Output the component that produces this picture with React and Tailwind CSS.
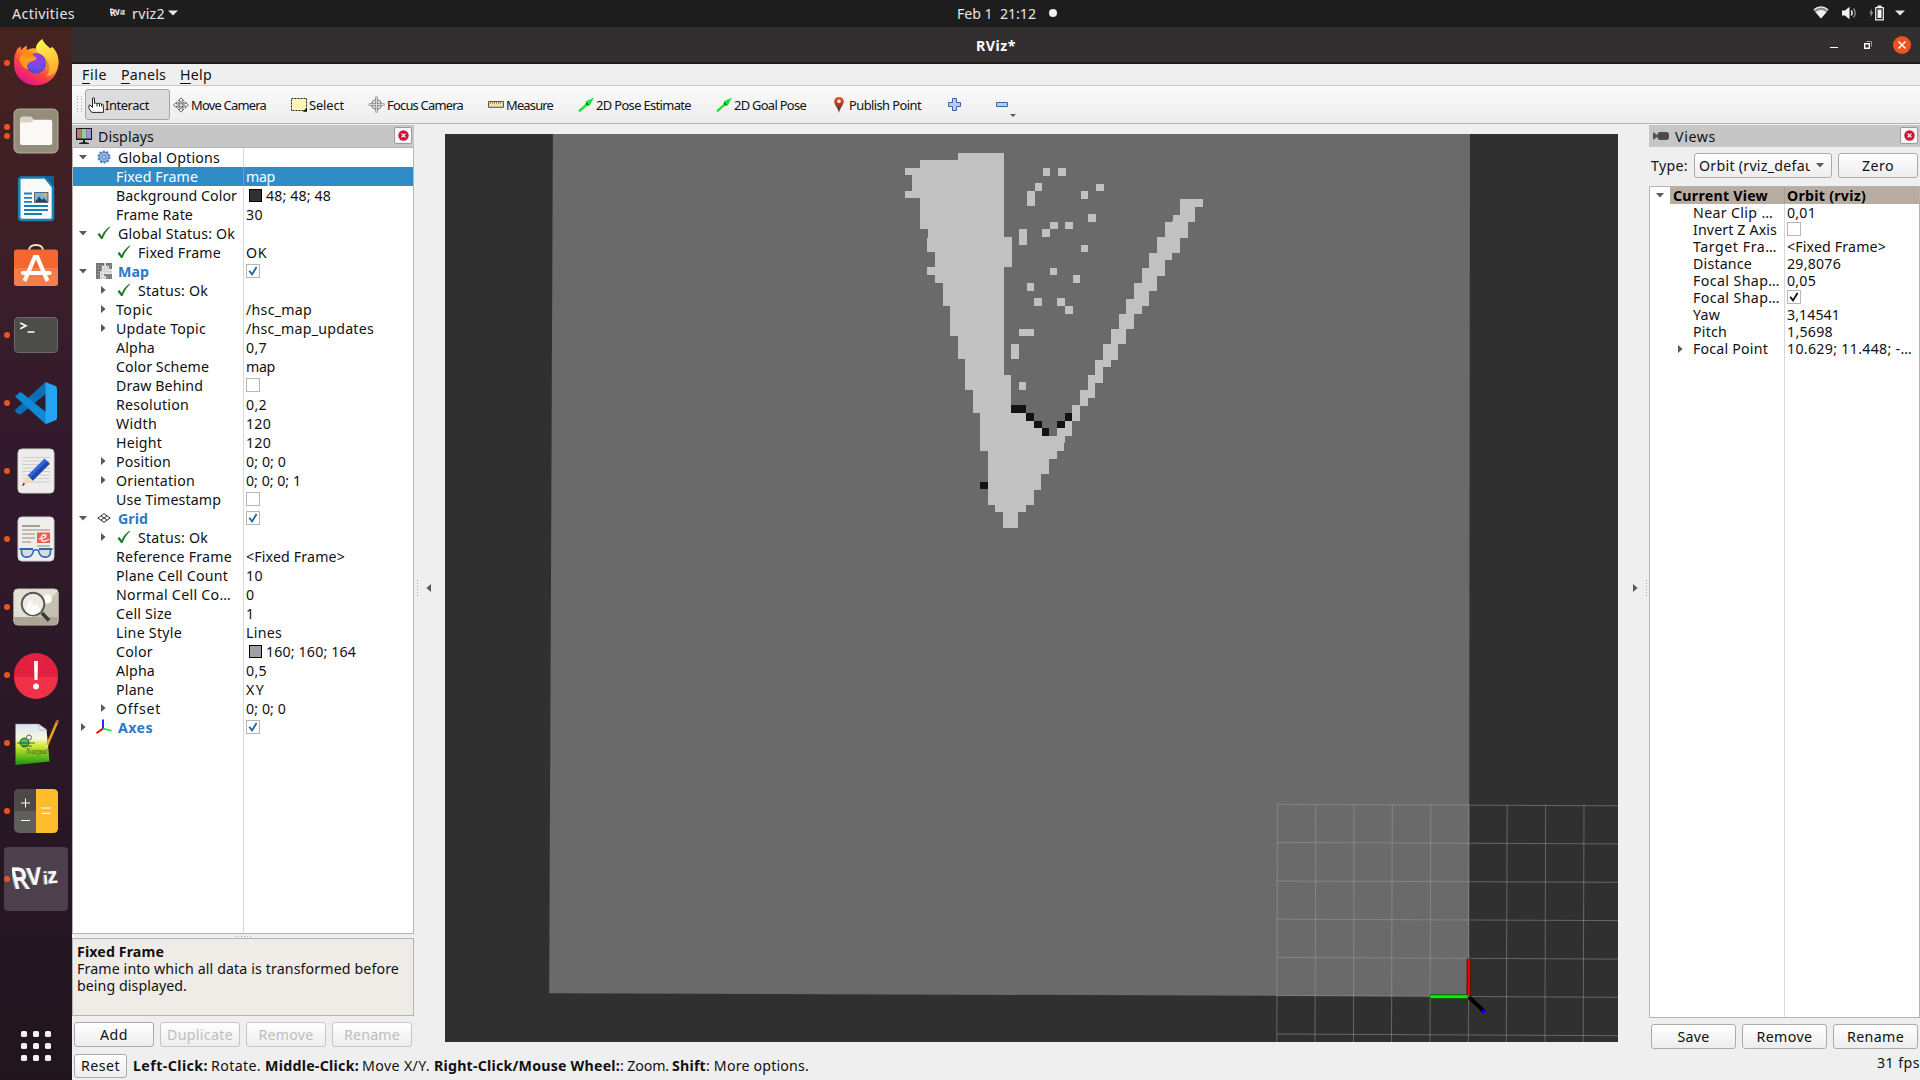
import React, { useLayoutEffect, useRef, useState } from "react";

/* Text set to a fixed advance width by adjusting its letter spacing. */
function Fit({ w, children, className = "" }) {
  const ref = useRef(null);
  const [ls, setLs] = useState(0);
  useLayoutEffect(() => {
    const el = ref.current;
    el.style.letterSpacing = "0px";
    const natural = el.getBoundingClientRect().width;
    const n = el.textContent.length;
    if (w && n > 1) setLs((w + 1 - natural) / n);
    el.style.letterSpacing = "";
  }, [w, children]);
  return (
    <span ref={ref} className={"inline-block shrink-0 whitespace-pre " + className} style={{ letterSpacing: ls + "px" }}>
      {children}
    </span>
  );
}

/* ---------- small glyphs ---------- */
const Down = () => (
  <svg width="8" height="5" viewBox="0 0 8 5"><path d="M0 0H8L4 4.6Z" fill="#5a5a5a" /></svg>
);
const Right = () => (
  <svg width="5" height="8" viewBox="0 0 5 8"><path d="M0 0V8L4.6 4Z" fill="#5a5a5a" /></svg>
);
const Tick = () => (
  <svg width="14" height="14" viewBox="0 0 14 14"><path d="M.5 8.2 2.6 6.9 4.6 10.2C6.6 6 9.4 2.6 13 .6L13.2 1.2C9.8 4.4 7.2 8.4 5.6 13H4Z" fill="#1d7a22" /></svg>
);
function Box({ checked, dark }) {
  return (
    <span className="box-border flex h-[14px] w-[14px] shrink-0 items-center justify-center border border-[#b6b6b6] bg-white">
      {checked && (
        <svg width="10" height="10" viewBox="0 0 10 10"><path d="M1.2 4.8 4 8.4 8.6 1" fill="none" stroke={dark ? "#111" : "#2166a5"} strokeWidth="1.8" /></svg>
      )}
    </span>
  );
}
const Swatch = ({ light }) => (
  <span className={"mr-[4px] ml-[3px] h-[13px] w-[13px] shrink-0 border border-black " + (light ? "bg-[#a0a0a4]" : "bg-[#303030]")} />
);
const Gear = () => (
  <svg width="14" height="14" viewBox="0 0 14 14">
    <circle cx="7" cy="7" r="5.6" fill="#8fb2dd" stroke="#4b7dbe" strokeWidth="1.8" strokeDasharray="2 1.5" />
    <circle cx="7" cy="7" r="4.6" fill="#9dbbe2" stroke="#4f80c0" strokeWidth=".8" />
    <circle cx="7" cy="7" r="2" fill="#c8daf0" stroke="#4472b4" strokeWidth="1" />
  </svg>
);
const MapIcon = () => (
  <svg width="16" height="16" viewBox="0 0 16 16" shapeRendering="crispEdges">
    <path d="M0 0H16V16H0Z" fill="#e6e6e6" />
    <path d="M0 0H8V3H6V8H4V16H0ZM10 0H16V6H13V3H10ZM8 11H16V16H10V13H8Z" fill="#6c6c6c" />
    <path d="M2.5 0V16M5.5 0V16M8.5 0V16M11.5 0V16M14.5 0V16M0 2.5H16M0 5.5H16M0 8.5H16M0 11.5H16M0 14.5H16" stroke="#b5b5b5" strokeOpacity=".45" strokeWidth="1" fill="none" />
  </svg>
);
const GridIcon = () => (
  <svg width="14" height="10" viewBox="0 0 14 10"><path d="M7 .7 13.2 5 7 9.3 .8 5ZM3.9 2.9 10.1 7.1M10.1 2.9 3.9 7.1" fill="none" stroke="#333" strokeWidth="1" /></svg>
);
const AxesIcon = () => (
  <svg width="16" height="16" viewBox="0 0 16 16">
    <path d="M7 9.5V.5" stroke="#00f" strokeWidth="1.7" /><path d="M7 9.5 15.6 11.8" stroke="#0e2" strokeWidth="1.7" /><path d="M7 9.5 .5 14.3" stroke="#e00" strokeWidth="1.9" />
  </svg>
);
const Dots = () => (
  <span className="flex h-[17px] w-px flex-col justify-between">
    {[0, 1, 2, 3, 4, 5].map((i) => <i key={i} className="h-px w-px bg-[#a5a5a5]" />)}
  </span>
);

/* ---------- displays tree ---------- */
/* level, arrow, icon, label, width, value, value width, extra */
const rows = [
  [0, "d", "gear", "Global Options", 101],
  [1, "", "", "Fixed Frame", 81, "map", 28, "sel"],
  [1, "", "", "Background Color", 120, "48; 48; 48", 64, "dark"],
  [1, "", "", "Frame Rate", 76, "30", 16],
  [0, "d", "tick", "Global Status: Ok", 116],
  [1, "", "tick", "Fixed Frame", 82, "OK", 20],
  [0, "d", "map", "Map", 30, null, 0, "on"],
  [1, "r", "tick", "Status: Ok", 69],
  [1, "r", "", "Topic", 36, "/hsc_map", 65],
  [1, "r", "", "Update Topic", 89, "/hsc_map_updates", 127],
  [1, "", "", "Alpha", 38, "0,7", 20],
  [1, "", "", "Color Scheme", 92, "map", 28],
  [1, "", "", "Draw Behind", 86, null, 0, "off"],
  [1, "", "", "Resolution", 72, "0,2", 20],
  [1, "", "", "Width", 40, "120", 24],
  [1, "", "", "Height", 45, "120", 24],
  [1, "r", "", "Position", 54, "0; 0; 0", 39],
  [1, "r", "", "Orientation", 78, "0; 0; 0; 1", 54],
  [1, "", "", "Use Timestamp", 104, null, 0, "off"],
  [0, "d", "grid", "Grid", 29, null, 0, "on"],
  [1, "r", "tick", "Status: Ok", 69],
  [1, "", "", "Reference Frame", 115, "<Fixed Frame>", 98],
  [1, "", "", "Plane Cell Count", 111, "10", 16],
  [1, "", "", "Normal Cell Co…", 114, "0", 8],
  [1, "", "", "Cell Size", 55, "1", 8],
  [1, "", "", "Line Style", 65, "Lines", 35],
  [1, "", "", "Color", 36, "160; 160; 164", 89, "light"],
  [1, "", "", "Alpha", 38, "0,5", 20],
  [1, "", "", "Plane", 37, "XY", 18],
  [1, "r", "", "Offset", 44, "0; 0; 0", 39],
  [0, "r", "axes", "Axes", 34, null, 0, "on"],
];
const icons = { gear: <Gear />, tick: <Tick />, map: <MapIcon />, grid: <GridIcon />, axes: <AxesIcon /> };

function Row({ r }) {
  const [level, arrow, icon, label, w, value, vw, extra] = r;
  const blue = extra === "on";
  return (
    <div className={"flex h-[19px] shrink-0 " + (extra === "sel" ? "bg-[#308cc6] text-white" : "")}>
      <div className={"flex w-[171px] border-r " + (extra === "sel" ? "border-[#5ba3d1]" : "border-[#d8d8d8]")}>
        {level === 1 && <span className="w-5 shrink-0" />}
        <span className="flex h-[18px] w-5 shrink-0 items-center justify-center">{arrow === "d" ? <Down /> : arrow === "r" ? <Right /> : null}</span>
        {icon ? (
          <span className={"flex h-[18px] shrink-0 items-center " + (level === 1 ? "w-[25px] pl-1" : icon === "map" || icon === "axes" ? "w-[25px] pl-[3px]" : "w-[25px] pl-1")}>{icons[icon]}</span>
        ) : (
          <span className="w-[3px] shrink-0" />
        )}
        <Fit w={w} className={"leading-[19px] " + (blue ? "font-bold text-[#2a7ac8]" : "")}>{label}</Fit>
      </div>
      <div className="flex h-[19px] pl-[2px]">
        {(extra === "on" || extra === "off") && <span className="pt-[2px]"><Box checked={blue} /></span>}
        {(extra === "dark" || extra === "light") && <span className="flex pt-[3px]"><Swatch light={extra === "light"} /></span>}
        {value && <Fit w={vw} className="leading-[19px]">{value}</Fit>}
      </div>
    </div>
  );
}

const viewRows = [
  ["Near Clip …", 79, "0,01", 28],
  ["Invert Z Axis", 83, null, 0, "off"],
  ["Target Fra…", 83, "<Fixed Frame>", 98],
  ["Distance", 58, "29,8076", 53],
  ["Focal Shap…", 86, "0,05", 28],
  ["Focal Shap…", 86, null, 0, "on"],
  ["Yaw", 26, "3,14541", 52],
  ["Pitch", 33, "1,5698", 45],
  ["Focal Point", 74, "10.629; 11.448; -…", 124, "", true],
];

function Btn({ w, tw, h, children, off }) {
  return (
    <div className={"flex shrink-0 items-center justify-center rounded-[3px] border bg-linear-to-b from-white to-[#ededed] pb-px " + w + " " + h + " " + (off ? "border-[#c6c6c6] text-[#bebebe]" : "border-[#ababab]")}>
      <Fit w={tw}>{children}</Fit>
    </div>
  );
}
const CloseBtn = () => (
  <span className="flex h-[17px] w-[18px] items-center justify-center rounded-[2px] border border-[#9b9b9b] bg-[#f7f7f7]">
    <svg width="11" height="11" viewBox="0 0 11 11"><circle cx="5.5" cy="5.5" r="5.2" fill="#c8193c" /><path d="M3.6 3.6 7.4 7.4M7.4 3.6 3.6 7.4" stroke="#fff" strokeWidth="1.3" /></svg>
  </span>
);

/* ---------- toolbar ---------- */
const Arrow2D = () => (
  <svg width="16" height="16" viewBox="0 0 16 16"><path d="M16 .5 7.5 4.6 8.6 6 .2 13.6 1.8 15.3 9.8 7.9 11.4 9Z" fill="#12e834" /><path d="M8 6 10.2 8.2" stroke="#075f16" strokeWidth="1.6" /></svg>
);
function Tool({ ml, iw, gap, tw, icon, children }) {
  return (
    <div className={"flex shrink-0 items-center " + ml}>
      <span className={"flex shrink-0 justify-center " + iw + " " + gap}>{icon}</span>
      <Fit w={tw} className="relative top-px">{children}</Fit>
    </div>
  );
}
const moveArrows = "M8 .8 10.6 3.6H9V7H12.4V5.2L15.4 8 12.4 10.8V9H9V12.4H10.6L8 15.2 5.4 12.4H7V9H3.6V10.8L.6 8 3.6 5.2V7H7V3.6H5.4Z";
function Toolbar() {
  return (
    <div className="flex h-[38px] shrink-0 items-center border-b border-[#b3b3b3] bg-linear-to-b from-[#fafafa] to-[#ededed] pl-[5px] text-[12.9px]">
      <div className="flex w-[8px] gap-[3px] pb-px"><Dots /><Dots /></div>
      <div className="flex h-[31px] w-[85px] shrink-0 items-center rounded-[3px] border border-[#a6a6a6] bg-[#dcdcdc] pl-[2px]">
        <svg className="mr-px shrink-0" width="16" height="16" viewBox="0 0 16 16">
          <path d="M4.5 10V2Q4.5.6 5.5.6T6.5 2V6.5Q7.5 5.5 8.8 6.6 10.2 5.6 11.2 6.8 12.5 5.8 13.3 7.2 15.4 6.6 15.4 8.6V15.4H3.8L1 11.5V8.4L2 8 4.5 10.5ZM9 7V9.5M11.5 7V9.5M13.5 7.2V9.5" fill="#fff" stroke="#222" strokeWidth="1" />
        </svg>
        <Fit w={43} className="relative top-px">Interact</Fit>
      </div>
      <Tool ml="ml-[3px]" iw="w-4" gap="mr-[2px]" tw={74} icon={<svg width="16" height="16" viewBox="0 0 16 16"><path d={moveArrows} fill="#fff" stroke="#555" strokeWidth=".9" /><path d="M4.5 4.5 11.5 11.5M11.5 4.5 4.5 11.5" stroke="#666" strokeWidth=".9" /><circle cx="8" cy="8" r="2" fill="#ddd" stroke="#666" strokeWidth=".8" /></svg>}>Move Camera</Tool>
      <Tool ml="ml-[25px]" iw="w-4" gap="mr-[2px]" tw={34} icon={<svg width="16" height="14" viewBox="0 0 16 14"><path d="M.5 .5H15.5V12.5H.5Z" fill="#fff6b8" stroke="#222" strokeWidth="1" strokeDasharray="2 1" /><path d="M16 9.5V13.8H11.8Z" fill="#111" /></svg>}>Select</Tool>
      <Tool ml="ml-[24px]" iw="w-[17px]" gap="mr-[2px]" tw={75} icon={<svg width="17" height="17" viewBox="0 0 17 17"><circle cx="8.5" cy="8.5" r="4.8" fill="none" stroke="#777" strokeWidth="1.1" /><circle cx="8.5" cy="8.5" r="2.2" fill="none" stroke="#888" strokeWidth=".9" /><path d="M8.5 .5V16.5M.5 8.5H16.5" stroke="#777" strokeWidth="2.2" /><path d="M8.5 1V16M1 8.5H16" stroke="#eee" strokeWidth=".8" /></svg>}>Focus Camera</Tool>
      <Tool ml="ml-[25px]" iw="w-4" gap="mr-[2px]" tw={46} icon={<svg width="16" height="7" viewBox="0 0 16 7"><path d="M.5 .5H15.5V6.3H.5Z" fill="#ece0a4" stroke="#55534a" /><path d="M2.5 1V3M4.5 1V3M6.5 1V3M8.5 1V3M10.5 1V3M12.5 1V3" stroke="#777252" strokeWidth=".7" /></svg>}>Measure</Tool>
      <Tool ml="ml-[25px]" iw="w-4" gap="mr-[2px]" tw={94} icon={<Arrow2D />}>2D Pose Estimate</Tool>
      <Tool ml="ml-[25px]" iw="w-4" gap="mr-[2px]" tw={71} icon={<Arrow2D />}>2D Goal Pose</Tool>
      <Tool ml="ml-[25px]" iw="w-[16px]" gap="mr-[2px]" tw={71} icon={<svg width="10" height="16" viewBox="0 0 10 16"><defs><linearGradient id="pin" x2="0" y2="1"><stop stopColor="#ee5230" /><stop offset=".6" stopColor="#8e3a22" /><stop offset="1" stopColor="#403528" /></linearGradient></defs><path d="M5 0C8 0 9.8 2 9.8 4.6 9.8 8 6 11 5 16 4 11 .2 8 .2 4.6 .2 2 2 0 5 0Z" fill="url(#pin)" /><circle cx="5" cy="4.3" r="1.7" fill="#fff" /></svg>}>Publish Point</Tool>
      <svg className="ml-[27px] shrink-0" width="13" height="13" viewBox="0 0 13 13"><path d="M4.5 .5H8.5V4.5H12.5V8.5H8.5V12.5H4.5V8.5H.5V4.5H4.5Z" fill="#b4cdec" stroke="#3465a4" /></svg>
      <svg className="ml-[35px] shrink-0" width="12" height="5" viewBox="0 0 12 5"><path d="M.5 .5H11.5V4.5H.5Z" fill="#b4cdec" stroke="#3465a4" /></svg>
      <svg className="mt-[22px] ml-[2px] shrink-0" width="6" height="4" viewBox="0 0 6 4"><path d="M0 0H6L3 3Z" fill="#5a5a5a" /></svg>
    </div>
  );
}

/* ---------- 3D view ---------- */
const freeSpace =
  "234,69 372,69 372,321 396,321 396,411 372,411 372,735 393,735 393,849 438,849 438,873 462,873 462,894 486,894 486,918 531,918 531,894 555,894 555,873 576,873 576,825 600,825 600,780 624,780 624,735 645,735 645,690 669,690 669,642 693,642 693,597 717,597 717,552 738,552 738,507 762,507 762,459 786,459 786,414 807,414 807,369 831,369 831,321 855,321 855,276 876,276 879,270 879,255 900,255 900,207 969,207 969,231 945,231 945,276 924,276 924,324 900,324 900,369 876,369 876,390 855,390 855,438 831,438 831,483 807,483 807,528 786,528 786,552 762,552 762,597 738,597 738,642 714,642 714,690 693,690 693,711 669,711 669,759 645,759 645,804 624,804 624,828 600,828 600,873 576,873 576,918 555,918 555,939 552,939 552,963 531,963 531,987 507,987 507,1032 483,1032 483,1080 462,1080 462,1125 438,1125 438,1146 414,1146 414,1194 369,1194 369,1146 345,1146 345,1125 324,1125 324,963 300,963 300,849 279,849 279,780 255,780 255,687 234,687 234,618 210,618 210,528 189,528 189,459 165,459 165,435 141,435 141,411 165,411 165,366 141,366 141,324 144,324 144,297 120,297 120,204 75,204 75,183 96,183 96,135 75,135 75,114 120,114 120,90 234,90";
const specks = [
  [489, 114, 21, 24], [534, 114, 24, 24], [465, 159, 21, 24], [648, 162, 24, 21], [441, 183, 24, 45], [603, 183, 21, 24], [624, 252, 24, 24],
  [510, 276, 24, 21], [555, 276, 24, 21], [417, 297, 24, 48], [486, 297, 24, 24], [603, 345, 21, 21], [510, 414, 21, 21], [579, 435, 21, 24],
  [441, 459, 21, 24], [462, 504, 24, 24], [531, 504, 24, 24], [555, 528, 24, 24], [417, 597, 45, 21], [393, 642, 24, 45], [417, 756, 21, 24],
];
const walls = [[393, 825, 45, 24], [438, 849, 24, 24], [462, 873, 24, 21], [486, 894, 21, 24], [531, 873, 24, 21], [555, 849, 21, 24], [300, 1056, 24, 21]];
const gridV = [[1277.4, 1276.8], [1315.9, 1315], [1354.1, 1353.5], [1392.3, 1391.5], [1430.8, 1430], [1469, 1468.4], [1507.2, 1506.3], [1545.7, 1544.9], [1584, 1583.2]];
const gridH = [[804.3, 805.8], [842.4, 843.9], [881, 882.3], [919.2, 920.6], [957.4, 959.1], [995.5, 997.3], [1034, 1035.7]];
function Viewport() {
  return (
    <svg className="block" width="1173" height="908" viewBox="445 134 1173 908">
      <path d="M445 134H1618V1042H445Z" fill="#303030" />
      <path d="M552.9 134H1470L1469 996.4 549.2 993.3Z" fill="#6a6a6a" />
      <g transform="translate(880 130) scale(.333333)" shapeRendering="crispEdges">
        <polygon points={freeSpace} fill="#c1c1c1" />
        {specks.map(([x, y, w, h], i) => <rect key={i} x={x} y={y} width={w} height={h} fill="#c1c1c1" />)}
        {walls.map(([x, y, w, h], i) => <rect key={i} x={x} y={y} width={w} height={h} fill="#131313" />)}
      </g>
      <g stroke="#a0a0a4" strokeOpacity=".48" strokeWidth="1">
        {gridV.map(([a, b], i) => <path key={i} d={`M${a} 804.5L${b} 1042`} />)}
        {gridH.map(([a, b], i) => <path key={i} d={`M1277 ${a}L1618 ${b}`} />)}
      </g>
      <path d="M1466.7 958.5H1470.7V996H1466.5Z" fill="#5a0505" />
      <path d="M1467.5 959H1470V996H1467.5Z" fill="#f00000" />
      <path d="M1430 994.3H1468V998.8H1430Z" fill="#076a07" />
      <path d="M1430.5 995.3H1467.5V997.9H1430.5Z" fill="#00f000" />
      <path d="M1469 997 1484 1011.5" stroke="#000" strokeWidth="4" />
      <circle cx="1484" cy="1011.5" r="1.9" fill="#00f" />
    </svg>
  );
}

/* ---------- dock ---------- */
const S = ({ children }) => <svg className="shrink-0" width="48" height="48" viewBox="0 0 48 48">{children}</svg>;
const Firefox = () => (
  <S>
    <defs>
      <linearGradient id="ffa" x1=".8" y1=".05" x2=".25" y2=".95"><stop stopColor="#fff44f" /><stop offset=".35" stopColor="#ffa02c" /><stop offset=".68" stopColor="#ff4240" /><stop offset="1" stopColor="#e3138d" /></linearGradient>
      <linearGradient id="ffy" x1=".4" x2=".7" y2="1"><stop stopColor="#fff44f" /><stop offset="1" stopColor="#ffa52a" /></linearGradient>
      <radialGradient id="ffp" cx=".55" cy=".25" r=".8"><stop stopColor="#a333dc" /><stop offset=".6" stopColor="#6b52e8" /><stop offset="1" stopColor="#5a3cc4" /></radialGradient>
    </defs>
    <g transform="translate(0 -.7)">
      <path d="M4.5 12.5C5 10.5 7 9 8.5 8.3L9.4 12C11 9.3 13 8 15.2 7.5 14.3 9.6 14.6 10.7 15 11.6 18 10.3 22 9.6 24 10.4 24.3 6 27 3.2 30.5 1 31.5 5 35 7 38 10.3 39 11.4 40 10.4 40 8.8 45 13.5 47 19.5 46.4 26 45.4 38.5 36 47 24 47 11.5 47 2 38 2 25.5 2 20 2.6 15.8 4.5 12.5Z" fill="url(#ffa)" />
      <path d="M30.5 1C31.5 5 35 7 38 10.3L40 8.8C45.5 14 47 20 46.2 26.5 45 34 40 38 34 38 38 34 38.5 28 36 23 33 17 25 16 24 10.4 24.3 6 27 3.2 30.5 1Z" fill="url(#ffy)" />
      <circle cx="24" cy="25" r="10.3" fill="url(#ffp)" />
      <path d="M7.5 20C8.5 16.8 11 15.8 15 17.2 19 18.8 23 17 24.8 20 23 22.8 19.5 22.8 17.5 24 15 25.5 14.5 28 16 31.5 11.5 30 8 25.5 7.5 20Z" fill="#ff9a1f" />
      <path d="M10 11.5C14 11 20 14 23 19 18 19.5 13.5 18.5 9.5 18Z" fill="#ff8a16" />
    </g>
  </S>
);
const Files = () => (
  <S><rect x="2" y="2" width="44" height="44" rx="5" fill="#958d7c" stroke="#b5ae9e" /><path d="M8 12Q8 9.5 10 9.5H18Q20 9.5 21 11.5L22 13H38V20H8Z" fill="#d8d4c8" /><path d="M8 15.5H19L22 12.8H38Q40.2 12.8 40.2 15V36Q40.2 38 38 38H10Q8 38 8 36Z" fill="#faf9f7" /></S>
);
const Writer = () => (
  <S><path d="M10 2.5H33L41 12V42.5Q41 45 38.5 45H10Q7.2 45 7.2 42.5V5.5Q7.2 2.5 10 2.5Z" fill="#fafafa" stroke="#1582b8" strokeWidth="2.6" /><path d="M33 1H42V12Z" fill="#0d6292" /><path d="M12 18.5H20M12 22.8H20M12 26.8H20M12 31H36M12 35H36M12 39H30" stroke="#1781b5" strokeWidth="1.8" /><path d="M22.5 17.5H36V27.5H22.5Z" fill="#73b9dc" stroke="#335" strokeWidth=".7" /><path d="M23 27 27 21.5 30 25 32 23 35.5 27Z" fill="#34404c" /><circle cx="33.5" cy="19.8" r="1.6" fill="#f0b429" /></S>
);
const Software = () => (
  <S><g transform="translate(0 -1)"><path d="M17 9Q17 3 24 3T31 9" fill="none" stroke="#f4e2c4" strokeWidth="1.8" /><path d="M2 10Q2 7.5 4.5 7.5H43.5Q46 7.5 46 10V41Q46 44 43 44H5Q2 44 2 41Z" fill="#f3682e" /><path d="M2 26H46V41Q46 44 43 44H5Q2 44 2 41Z" fill="#f57d48" /><path d="M12.5 39 22.8 15H25.2L35.5 39" fill="none" stroke="#fff" strokeWidth="4.2" /><path d="M11 31H37.5" stroke="#fff" strokeWidth="4.2" strokeLinecap="round" /></g></S>
);
const Terminal = () => (
  <S><rect x="2.5" y="6.5" width="43" height="35" rx="3.5" fill="#4c4c4b" stroke="#6a6968" /><path d="M8.3 12 14 14.8 8.3 17.7" fill="none" stroke="#fff" strokeWidth="1.6" /><path d="M15.5 21H22.5" stroke="#fff" strokeWidth="1.5" /></S>
);
const Code = () => (
  <S><path d="M3 31 33.5 3 35 14 8.5 35.5Q6.5 36 3 32Z" fill="#0a6fb5" /><path d="M3 17.5 7.5 13.5 9.5 13.5 35 34 33.5 45Z" fill="#0b8ad6" /><path d="M33.5 3 43.5 7Q45 8 45 9.5V38.5Q45 40.5 43.5 41.2L33.5 45.3Z" fill="#24a4f2" /></S>
);
const Editor = () => (
  <S><rect x="6" y="2" width="36" height="44" rx="4" fill="#eeedec" stroke="#cfcfcf" /><path d="M10 10.5H38M10 14H38M10 17.5H38M10 21H38M10 24.5H38M10 28H38M10 31.5H38M10 35H38" stroke="#cbcbcb" strokeWidth=".9" /><path d="M32.5 11.5 37.5 16.5 20.5 33.5 15.5 28.5Z" fill="#2e64dd" /><path d="M35 14 37.8 16.8 20.8 33.8 18 31Z" fill="#1e48a8" /><path d="M15.5 28.5 20.5 33.5 10 39Z" fill="#f6d6b4" /><path d="M11.6 35.8 13 37.5 9.8 39.2Z" fill="#333" /></S>
);
const Viewer = () => (
  <S><rect x="6" y="2" width="36" height="44" rx="4" fill="#efeeec" stroke="#cfcfcf" /><path d="M10 11H28" stroke="#9d9684" strokeWidth="1.8" /><path d="M10 15H38M10 19H23M10 23H23M10 27H19M25 31H38" stroke="#c2bcac" strokeWidth="1.8" /><rect x="25" y="17.5" width="13" height="10.5" fill="#f15b53" /><path d="M27 24Q34 23.5 34 20.5 31.5 18.5 29.3 22 28.5 27 33 26L37 24.5" fill="none" stroke="#fff" strokeWidth="1.3" /><path d="M9.5 34.5Q9 41.5 13 42 20.5 43 21.5 35.5Q24 34 26.5 35.5 27.5 43 35 42 39 41.5 38.5 34.5" fill="#d8dde2" stroke="#2a69b4" strokeWidth="1.6" /><path d="M7.5 34H21M27 34H40.5" stroke="#2a69b4" strokeWidth="2.2" /></S>
);
const Magnifier = () => (
  <S><rect x="1.8" y="6" width="44.4" height="36" rx="4" fill="#e4e2d6" stroke="#c9c6b7" /><path d="M46 8V34H20Z" fill="#c4c0b2" /><path d="M2 34H46V38Q46 42 42 42H6Q2 42 2 38Z" fill="#aca695" /><circle cx="35.5" cy="16" r="4.5" fill="#fafafa" /><path d="M30 30 37 37.5" stroke="#3a3a3a" strokeWidth="3.6" /><circle cx="21" cy="21" r="11.3" fill="#ecebe4" stroke="#575757" strokeWidth="1.9" /><path d="M13 27 18 16 22 23 24.5 20 29 28Q25 32 20 32Q15 31 13 27Z" fill="#fbfbf8" /></S>
);
const Alert = () => (
  <S><circle cx="24" cy="24" r="22" fill="#e2203f" /><path d="M2 26H46A22 22 0 0 1 2 26Z" fill="#f03148" /><path d="M22 10H26L25.5 29H22.5Z" fill="#fff" /><circle cx="24" cy="35.4" r="2.9" fill="#fff" /></S>
);
const Notepad = () => (
  <S><defs><linearGradient id="np" x2="0" y2="1"><stop offset=".05" stopColor="#dce8f2" /><stop offset=".35" stopColor="#f7f7df" /><stop offset=".55" stopColor="#cbe82c" /><stop offset="1" stopColor="#189414" /></linearGradient></defs><path d="M3.5 5H27L34.5 10.5 37.5 42.5 3.5 46Z" fill="url(#np)" /><path d="M3.5 5H26" stroke="#888" strokeDasharray="1 1" /><path d="M26 5.5 28.5 11.5 34.5 10.5Z" fill="#e8eef3" stroke="#999" strokeWidth=".5" /><circle cx="12.5" cy="23.5" r="4.5" fill="#4fbf47" stroke="#2c5b2e" /><circle cx="17" cy="18.5" r="2.5" fill="#eee" stroke="#444" strokeWidth=".8" /><path d="M5 24H23M10 27H20" stroke="#335" strokeWidth=".8" /><text x="14" y="35" fontSize="9" fontStyle="italic" fontFamily="Liberation Serif, serif" textLength="21" lengthAdjust="spacingAndGlyphs" fill="#40531b">Notepad</text><path d="M45.5 2 34.5 27.5" stroke="#e8a418" strokeWidth="2.6" /><path d="M45.8 1 44.6 4" stroke="#b45a4a" strokeWidth="2.6" /><path d="M35.5 25.5 33.8 29.2" stroke="#ecd9b0" strokeWidth="1.8" /></S>
);
const Calc = () => (
  <S><rect x="2" y="2" width="44" height="44" rx="5" fill="#5f5e5d" /><path d="M2 24V7Q2 2 7 2H24V24Z" fill="#4b4a49" /><path d="M24 2H41Q46 2 46 7V41Q46 46 41 46H24Z" fill="#fdbc2a" /><path d="M9 16H18M13.5 11.5V20.5M9 33.5H18M29 21H39M29 26.3H39" stroke="#fff" strokeWidth="1" /></S>
);
function RVizMark({ size }) {
  return (
    <svg className="shrink-0" width={size} height={size} viewBox="0 0 48 48" fontFamily="Liberation Sans, sans-serif" fontWeight="bold">
      {[["#9b9b9b", -0.9], ["#fafafa", 0.3]].map(([c, d]) => (
        <g key={c} fill={c} transform={`translate(${d} 0)`}>
          <text transform="translate(2.5 33.5) skewX(14) scale(.78 1.12)" fontSize="28">R</text>
          <text transform="translate(15.5 30.5) rotate(-5) scale(.88 1)" fontSize="25">V</text>
          <text transform="translate(31.5 29.5) rotate(-4) scale(.85 .9)" fontSize="20">i</text>
          <text transform="translate(36 28.5) rotate(-5) scale(1 1.12)" fontSize="20">z</text>
        </g>
      ))}
    </svg>
  );
}
const dock = [
  [<Firefox />, 1], [<Files />, 2], [<Writer />, 0], [<Software />, 0], [<Terminal />, 1], [<Code />, 1], [<Editor />, 1], [<Viewer />, 1],
  [<Magnifier />, 1], [<Alert />, 1], [<Notepad />, 1], [<Calc />, 1], [<RVizMark size={48} />, 1],
];
function Dock() {
  return (
    <div className="flex w-[72px] shrink-0 flex-col gap-1 bg-linear-to-b from-[#47221f] via-[#321a2d] via-40% to-[#21151d] px-1 pt-1">
      {dock.map(([icon, dots], i) => (
        <div key={i} className={"flex h-16 w-16 shrink-0 items-center rounded " + (i === 12 ? "bg-[#4d404c]" : "")}>
          <span className="flex w-[8px] shrink-0 flex-col items-start gap-[3px]">
            {Array.from({ length: dots }, (_, k) => <i key={k} className="h-[6px] w-[6px] rounded-full bg-[#e95420]" />)}
          </span>
          {icon}
        </div>
      ))}
      <div className="mt-auto mb-[19px] ml-[17px] grid w-[30px] grid-cols-3 gap-[6px]">
        {Array.from({ length: 9 }, (_, i) => <i key={i} className="h-[6px] w-[6px] rounded-[1.5px] bg-[#f3f3f3]" />)}
      </div>
    </div>
  );
}

/* ---------- shell ---------- */
function TopBar() {
  return (
    <div className="flex h-[27px] shrink-0 items-center bg-[#1d1d1d] pb-px text-[#e6e6e6]">
      <Fit w={62} className="ml-[12px]">Activities</Fit>
      <span className="mr-[6px] ml-[35px]"><RVizMark size={16} /></span>
      <Fit w={32}>rviz2</Fit>
      <svg className="ml-[3px]" width="10" height="6" viewBox="0 0 10 6"><path d="M0 .5H10L5 5.5Z" fill="#e6e6e6" /></svg>
      <span className="ml-[779px] flex items-center"><Fit w={78}>{"Feb 1  21:12"}</Fit><i className="ml-[13px] h-[8px] w-[8px] rounded-full bg-[#f2f2f2]" /></span>
      <div className="mr-[15px] ml-auto flex items-center">
        <svg width="16" height="14" viewBox="0 0 16 14"><path d="M.5 4Q8-2.4 15.5 4L8 12.5Z" fill="#8a8a8a" /><path d="M.8 3.8Q8-2 15.2 3.8" fill="none" stroke="#eee" strokeWidth="1.2" /><path d="M2.5 6Q8 2 13.5 6L8 12.6Z" fill="#f2f2f2" /></svg>
        <svg className="ml-[13px]" width="15" height="14" viewBox="0 0 15 14"><path d="M0 4.5H3L7.5 .8V13.2L3 9.5H0Z" fill="#f2f2f2" /><path d="M9.3 4.5Q11 7 9.3 9.5" stroke="#f2f2f2" fill="none" strokeWidth="1.4" /><path d="M11.5 2.5Q15 7 11.5 11.5" stroke="#8b8b8b" fill="none" strokeWidth="1.4" /></svg>
        <svg className="ml-[12px]" width="15" height="16" viewBox="0 0 15 16"><path d="M3 3.5 .3 8.5H2L1.6 12.5 4.2 7.3H2.5Z" fill="#999" /><path d="M6.7 2.7H14.3V14.8H6.7Z" fill="none" stroke="#f2f2f2" strokeWidth="1.2" /><path d="M8.5 4.5H12.5V13H8.5ZM8.5 .6H12.5V2.5H8.5Z" fill="#f2f2f2" /></svg>
        <svg className="ml-[11px]" width="10" height="6" viewBox="0 0 10 6"><path d="M0 .5H10L5 5.5Z" fill="#e6e6e6" /></svg>
      </div>
    </div>
  );
}
const Menu = ({ w, ml, a, b }) => <Fit w={w} className={ml}><u className="underline decoration-1 underline-offset-[3px]">{a}</u>{b}</Fit>;

export default function App() {
  return (
    <div className="flex h-[1080px] w-[1920px] flex-col overflow-hidden bg-[#efefef] font-['Noto_Sans',sans-serif] text-[14.2px] leading-[17px] text-[#111]">
      <TopBar />
      <div className="flex min-h-0 flex-1">
        <Dock />
        <div className="flex w-[1848px] flex-col">
          <div className="flex h-[37px] shrink-0 items-center border-b-2 border-[#1f1c1c] bg-[#332f30] text-white">
            <Fit w={39} className="relative top-px ml-[904px] font-bold">RViz*</Fit>
            <span className="mt-[6px] mr-[26px] ml-auto h-px w-[8px] bg-white" />
            <svg className="mr-[21px]" width="8" height="8" viewBox="0 0 8 8"><path d="M.7 2.7H5.3V7.3H.7Z" fill="none" stroke="#fff" strokeWidth="1.4" /><path d="M2.5 .5H7.5V5.5" fill="none" stroke="#999" /></svg>
            <svg className="mr-[9px]" width="18" height="18" viewBox="0 0 18 18"><circle cx="9" cy="9" r="9" fill="#e95420" /><path d="M5.5 5.5 12.5 12.5M12.5 5.5 5.5 12.5" stroke="#fff" strokeWidth="1.5" /></svg>
          </div>
          <div className="flex h-[22px] shrink-0 items-center border-b border-[#cacaca]">
            <Menu w={24} ml="ml-[10px]" a="F" b="ile" />
            <Menu w={44} ml="ml-[14px]" a="P" b="anels" />
            <Menu w={31} ml="ml-[14px]" a="H" b="elp" />
          </div>
          <Toolbar />
          <div className="flex h-[925px] pt-px">
            {/* displays panel */}
            <div className="flex w-[342px] shrink-0 flex-col">
              <div className="flex h-[22px] shrink-0 items-center bg-[#c6c6c6] pr-[2px] pl-[4px]">
                <svg width="16" height="16" viewBox="0 0 16 16"><path d="M0 0H16V12H0Z" fill="#1a1a1a" /><path d="M1 1H5.7V10.5H1Z" fill="#b97a7a" /><path d="M5.7 1H10.3V10.5H5.7Z" fill="#8dd492" /><path d="M10.3 1H15V10.5H10.3Z" fill="#9c93dc" /><path d="M7 12H9V14H7ZM3 15.2Q8 12.6 13 15.2V16H3Z" fill="#222" /></svg>
                <Fit w={55} className="ml-[6px]">Displays</Fit>
                <span className="mb-[2px] ml-auto"><CloseBtn /></span>
              </div>
              <div className="flex h-[787px] shrink-0 flex-col border border-[#b4b4b4] bg-white">
                {rows.map((r, i) => <Row key={i} r={r} />)}
                <div className="flex min-h-0 flex-1"><span className="w-[171px] border-r border-[#d8d8d8]" /></div>
              </div>
              <div className="flex h-[4px] shrink-0 items-center justify-center gap-[2px]">{[0, 1, 2, 3, 4, 5].map((i) => <i key={i} className="h-px w-px bg-[#a5a5a5]" />)}</div>
              <div className="flex h-[78px] shrink-0 flex-col border border-[#b4b4b4] bg-[#efebe7] pt-[4px] pl-[4px]">
                <Fit w={86} className="self-start font-bold">Fixed Frame</Fit>
                <Fit w={321} className="self-start">Frame into which all data is transformed before</Fit>
                <Fit w={109} className="self-start">being displayed.</Fit>
              </div>
              <div className="mt-[6px] flex gap-[6px] pl-[2px]">
                <Btn w="w-20" h="h-[25px]" tw={27}>Add</Btn>
                <Btn w="w-20" h="h-[25px]" tw={65} off>Duplicate</Btn>
                <Btn w="w-20" h="h-[25px]" tw={54} off>Remove</Btn>
                <Btn w="w-20" h="h-[25px]" tw={55} off>Rename</Btn>
              </div>
            </div>
            <div className="flex h-[926px] w-[31px] shrink-0 items-center gap-[8px] pl-[3px]"><Dots /><span className="-scale-x-100"><Right /></span></div>
            <div className="shrink-0 pt-[9px]"><Viewport /></div>
            <div className="flex h-[926px] w-[31px] shrink-0 items-center gap-[8px] pl-[15px]"><Right /><Dots /></div>
            {/* views panel */}
            <div className="flex w-[271px] shrink-0 flex-col">
              <div className="flex h-[22px] shrink-0 items-center bg-[#c6c6c6] pr-[2px] pl-[4px]">
                <svg width="16" height="10" viewBox="0 0 16 10"><path d="M0 1 4.5 4V6L0 9Z" fill="#555" /><rect x="4.5" y="1" width="11.5" height="8" rx="3" fill="#4a4a4a" /></svg>
                <Fit w={40} className="ml-[6px]">Views</Fit>
                <span className="mb-[2px] ml-auto"><CloseBtn /></span>
              </div>
              <div className="mt-[6px] flex h-[25px] shrink-0 items-center pl-[2px]">
                <Fit w={36}>Type:</Fit>
                <div className="ml-[6px] flex h-[25px] w-[138px] items-center rounded-[3px] border border-[#ababab] bg-linear-to-b from-white to-[#ededed] pl-[4px]">
                  <span className="w-[111px] overflow-hidden whitespace-nowrap"><Fit w={114}>Orbit (rviz_defau</Fit></span>
                  <span className="ml-[6px]"><Down /></span>
                </div>
                <span className="ml-[6px]"><Btn w="w-20" h="h-[25px]" tw={31}>Zero</Btn></span>
              </div>
              <div className="mt-[8px] flex h-[832px] shrink-0 flex-col border border-[#b4b4b4] bg-white">
                <div className="flex h-[17px] shrink-0 font-bold text-black">
                  <span className="flex w-5 items-center justify-center"><Down /></span>
                  <span className="flex w-[115px] border-r border-[#a99c92] bg-[#b9aca1] pl-[3px]"><Fit w={94}>Current View</Fit></span>
                  <span className="flex flex-1 bg-[#b9aca1] pl-[2px]"><Fit w={78}>Orbit (rviz)</Fit></span>
                </div>
                {viewRows.map(([l, w, v, vw, box, arrow], i) => (
                  <div key={i} className="flex h-[17px] shrink-0">
                    <span className="flex w-[135px] border-r border-[#d8d8d8]">
                      <span className="flex w-[43px] shrink-0 items-center pl-[28px]">{arrow && <Right />}</span>
                      <Fit w={w}>{l}</Fit>
                    </span>
                    <span className="flex pl-[2px] pt-px">{box ? <Box checked={box === "on"} dark /> : <Fit w={vw} className="-mt-px">{v}</Fit>}</span>
                  </div>
                ))}
                <div className="flex min-h-0 flex-1"><span className="w-[135px] border-r border-[#d8d8d8]" /></div>
              </div>
              <div className="mt-[6px] flex gap-[6px] pl-[2px]">
                <Btn w="w-[85px]" h="h-[25px]" tw={31}>Save</Btn>
                <Btn w="w-[85px]" h="h-[25px]" tw={55}>Remove</Btn>
                <Btn w="w-[85px]" h="h-[25px]" tw={56}>Rename</Btn>
              </div>
            </div>
          </div>
          <div className="flex h-[31px] items-start pt-[5px] pl-[2px]">
            <Btn w="w-[53px]" h="h-[24px]" tw={38}>Reset</Btn>
            <div className="mt-[3px] ml-[6px] flex">
              <Fit w={74} className="mr-[3px] font-bold">Left-Click:</Fit>
              <Fit w={49} className="mr-[4px]">Rotate.</Fit>
              <Fit w={93} className="mr-[3px] font-bold">Middle-Click:</Fit>
              <Fit w={67} className="mr-[4px]">Move X/Y.</Fit>
              <Fit w={185} className="font-bold">Right-Click/Mouse Wheel:</Fit>
              <Fit w={48} className="mr-[3px]">: Zoom.</Fit>
              <Fit w={33} className="font-bold">Shift</Fit>
              <Fit w={102}>: More options.</Fit>
            </div>
            <Fit w={42} className="mr-0 ml-auto">31 fps</Fit>
          </div>
        </div>
      </div>
    </div>
  );
}
